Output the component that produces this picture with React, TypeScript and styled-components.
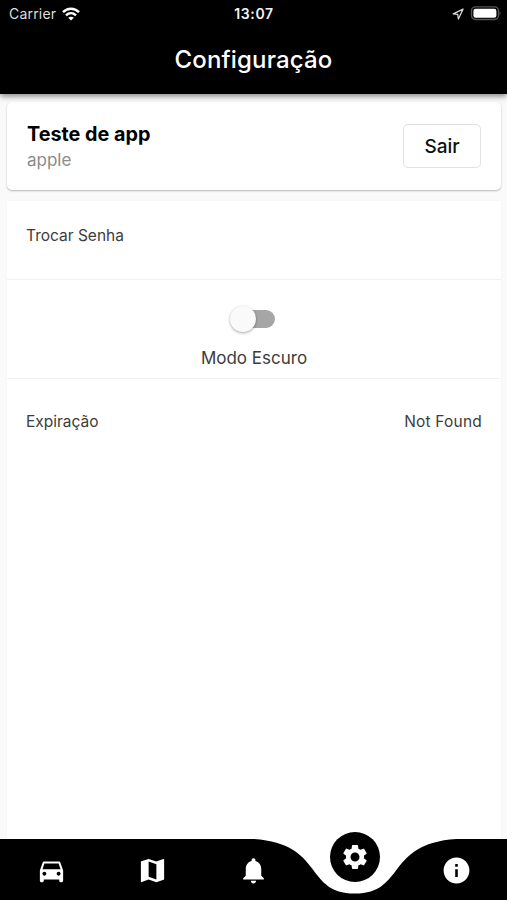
import React from "react";
import styled, { createGlobalStyle, css } from "styled-components";
import { MdDirectionsCar, MdMap, MdNotifications, MdSettings, MdInfo } from "react-icons/md";

const GlobalStyle = createGlobalStyle`
  * { box-sizing: border-box; }
  body { margin: 0; background: #fafafa; }
`;

const Screen = styled.div`
  width: 507px;
  height: 900px;
  display: flex;
  flex-direction: column;
  overflow: hidden;
  background: #fafafa;
  color: #3c3c3c;
  font-family: Inter, "Liberation Sans", sans-serif;
`;

const Header = styled.header`
  position: relative;
  z-index: 1;
  flex: 0 0 93.6px;
  background: #000;
  color: #fff;
  box-shadow: 0 2px 6px rgba(0, 0, 0, 0.5);
`;

const StatusBar = styled.div`
  height: 27px;
  padding: 0 6px 0 9px;
  display: grid;
  grid-template-columns: 1fr auto 1fr;
  align-items: center;
`;

const StatusGroup = styled.div<{ $end?: boolean }>`
  display: flex;
  align-items: center;
  gap: 6px;
  justify-content: ${(p) => (p.$end ? "flex-end" : "flex-start")};
`;

const Carrier = styled.span`
  font-size: 14px;
  line-height: 18px;
  letter-spacing: 0.2px;
  color: #dedede;
`;

const Clock = styled.time`
  margin-right: 2px;
  font-size: 14px;
  line-height: 18px;
  font-weight: 600;
  letter-spacing: 0.6px;
  color: #f2f2f2;
`;

const Title = styled.h1`
  margin: 17px 0 0;
  text-align: center;
  font-size: 24px;
  line-height: 32px;
  font-weight: 500;
  letter-spacing: 0.15px;
`;

const Content = styled.main`
  flex: 1;
  min-height: 0;
  padding: 8.4px 6px 0 7px;
  display: flex;
  flex-direction: column;
  gap: 11px;
`;

const AccountCard = styled.section`
  flex: 0 0 88px;
  padding: 1px 20px 0;
  display: flex;
  align-items: center;
  justify-content: space-between;
  background: #fff;
  border-radius: 5px;
  box-shadow: 0 1px 2px rgba(0, 0, 0, 0.28);
`;

const AccountName = styled.div`
  font-size: 19.8px;
  line-height: 26px;
  font-weight: 700;
  color: #000;
`;

const AccountUser = styled.div`
  font-size: 17px;
  line-height: 26px;
  color: #8b8b8b;
`;

const AccountInfo = styled.div`
  padding-top: 2px;
`;

const LogoutButton = styled.button`
  width: 78px;
  height: 44px;
  padding: 2px 0 0;
  border: 1px solid #e2e2e2;
  border-radius: 5px;
  background: #fff;
  color: #111;
  font: 500 19px/24px Inter, sans-serif;
`;

const SettingsList = styled.section`
  flex: 1;
  background: #fff;
  box-shadow: 0 0 2px rgba(0, 0, 0, 0.04);
`;

const Row = styled.div<{ $height: number; $stacked?: boolean; $divided?: boolean }>`
  height: ${(p) => p.$height}px;
  padding: 0 19px;
  display: flex;
  font-size: 15.5px;
  line-height: 20px;
  ${(p) => p.$divided && css`border-bottom: 1.5px solid #f1f1f1;`}
  ${(p) =>
    p.$stacked
      ? css`flex-direction: column; align-items: center; padding-top: 30px;`
      : css`justify-content: space-between; padding-top: 25px;`}
`;

const ExpiryRow = styled(Row)`
  padding-top: 33px;
`;

const ExpiryValue = styled.span`
  letter-spacing: 0.2px;
`;

const Switch = styled.button`
  width: 45px;
  height: 18px;
  margin-right: 4px;
  padding: 0;
  display: flex;
  align-items: center;
  border: 0;
  border-radius: 0 9px 9px 0;
  background: linear-gradient(#a6a6a6, #a6a6a6) right / 35px 18px no-repeat;
`;

const SwitchThumb = styled.span`
  flex: none;
  width: 26px;
  height: 26px;
  border-radius: 50%;
  background: #fafafa;
  box-shadow: 0 1px 3px rgba(0, 0, 0, 0.35);
`;

const SwitchLabel = styled.span`
  margin-top: 18px;
  font-size: 17px;
  line-height: 24px;
`;

const NavBar = styled.nav`
  position: relative;
  z-index: 1;
  flex: 0 0 61px;
  display: grid;
  grid-template-columns: repeat(5, 1fr);
  background: #fff;
  color: #fff;
`;

const NavCurve = styled.svg`
  position: absolute;
  inset: 0;
`;

const NavItem = styled.a<{ $active?: boolean }>`
  position: relative;
  display: flex;
  justify-content: center;
  justify-self: center;
  align-self: start;
  align-items: center;
  ${(p) =>
    p.$active
      ? css`width: 50px; height: 50px; margin-top: -7px; border-radius: 50%; background: #000;`
      : css`width: 50px; height: 61px; padding: 1px 0 0 1px;`}
`;

const Wifi = () => (
  <svg width="18" height="14" viewBox="0 0 18 14" fill="none" stroke="#fff" strokeWidth="2.5">
    <path d="M1 5.1C5.6.5 12.4.5 17 5.1" />
    <path d="M4 8.4c2.9-2.8 7.1-2.8 10 0" />
    <path d="M9 13.5 6.2 10.8c1.6-1.5 4-1.5 5.6 0Z" fill="#fff" stroke="none" />
  </svg>
);

const LocationArrow = () => (
  <svg width="12" height="12" viewBox="0 0 12 12" fill="none" stroke="#d8d8d8" strokeWidth="1.3" strokeLinejoin="round">
    <path d="M11 1.2 1.2 5.8l4.5.6.7 4.6Z" />
  </svg>
);

const Battery = () => (
  <svg width="31" height="15" viewBox="0 0 31 15">
    <rect x="1.5" y=".9" width="27" height="12.6" rx="4" fill="none" stroke="#555" strokeWidth="1.4" />
    <rect x="3.4" y="2.7" width="23" height="9" rx="2.2" fill="#fff" />
    <path d="M29.6 5q1.6 2.2 0 4.4Z" fill="#666" />
  </svg>
);

export default function App() {
  return (
    <Screen>
      <GlobalStyle />
      <Header>
        <StatusBar>
          <StatusGroup>
            <Carrier>Carrier</Carrier>
            <Wifi />
          </StatusGroup>
          <Clock>13:07</Clock>
          <StatusGroup $end>
            <LocationArrow />
            <Battery />
          </StatusGroup>
        </StatusBar>
        <Title>Configuração</Title>
      </Header>
      <Content>
        <AccountCard>
          <AccountInfo>
            <AccountName>Teste de app</AccountName>
            <AccountUser>apple</AccountUser>
          </AccountInfo>
          <LogoutButton>Sair</LogoutButton>
        </AccountCard>
        <SettingsList>
          <Row $height={79} $divided>
            <span>Trocar Senha</span>
          </Row>
          <Row $height={99} $stacked $divided>
            <Switch role="switch" aria-checked={false} aria-label="Modo Escuro">
              <SwitchThumb />
            </Switch>
            <SwitchLabel>Modo Escuro</SwitchLabel>
          </Row>
          <ExpiryRow $height={87}>
            <span>Expiração</span>
            <ExpiryValue>Not Found</ExpiryValue>
          </ExpiryRow>
        </SettingsList>
      </Content>
      <NavBar>
        <NavCurve width="507" height="61" viewBox="0 0 507 61">
          <path
            d="M0 0H253.5C324.5 4.6 304.2 54.6 354.9 54.6S385.3 4.6 456.3 0H507V61H0Z"
            fill="#000"
          />
        </NavCurve>
        <NavItem><MdDirectionsCar size={31} /></NavItem>
        <NavItem><MdMap size={31} /></NavItem>
        <NavItem><MdNotifications size={31} /></NavItem>
        <NavItem $active><MdSettings size={30} /></NavItem>
        <NavItem><MdInfo size={31} /></NavItem>
      </NavBar>
    </Screen>
  );
}
